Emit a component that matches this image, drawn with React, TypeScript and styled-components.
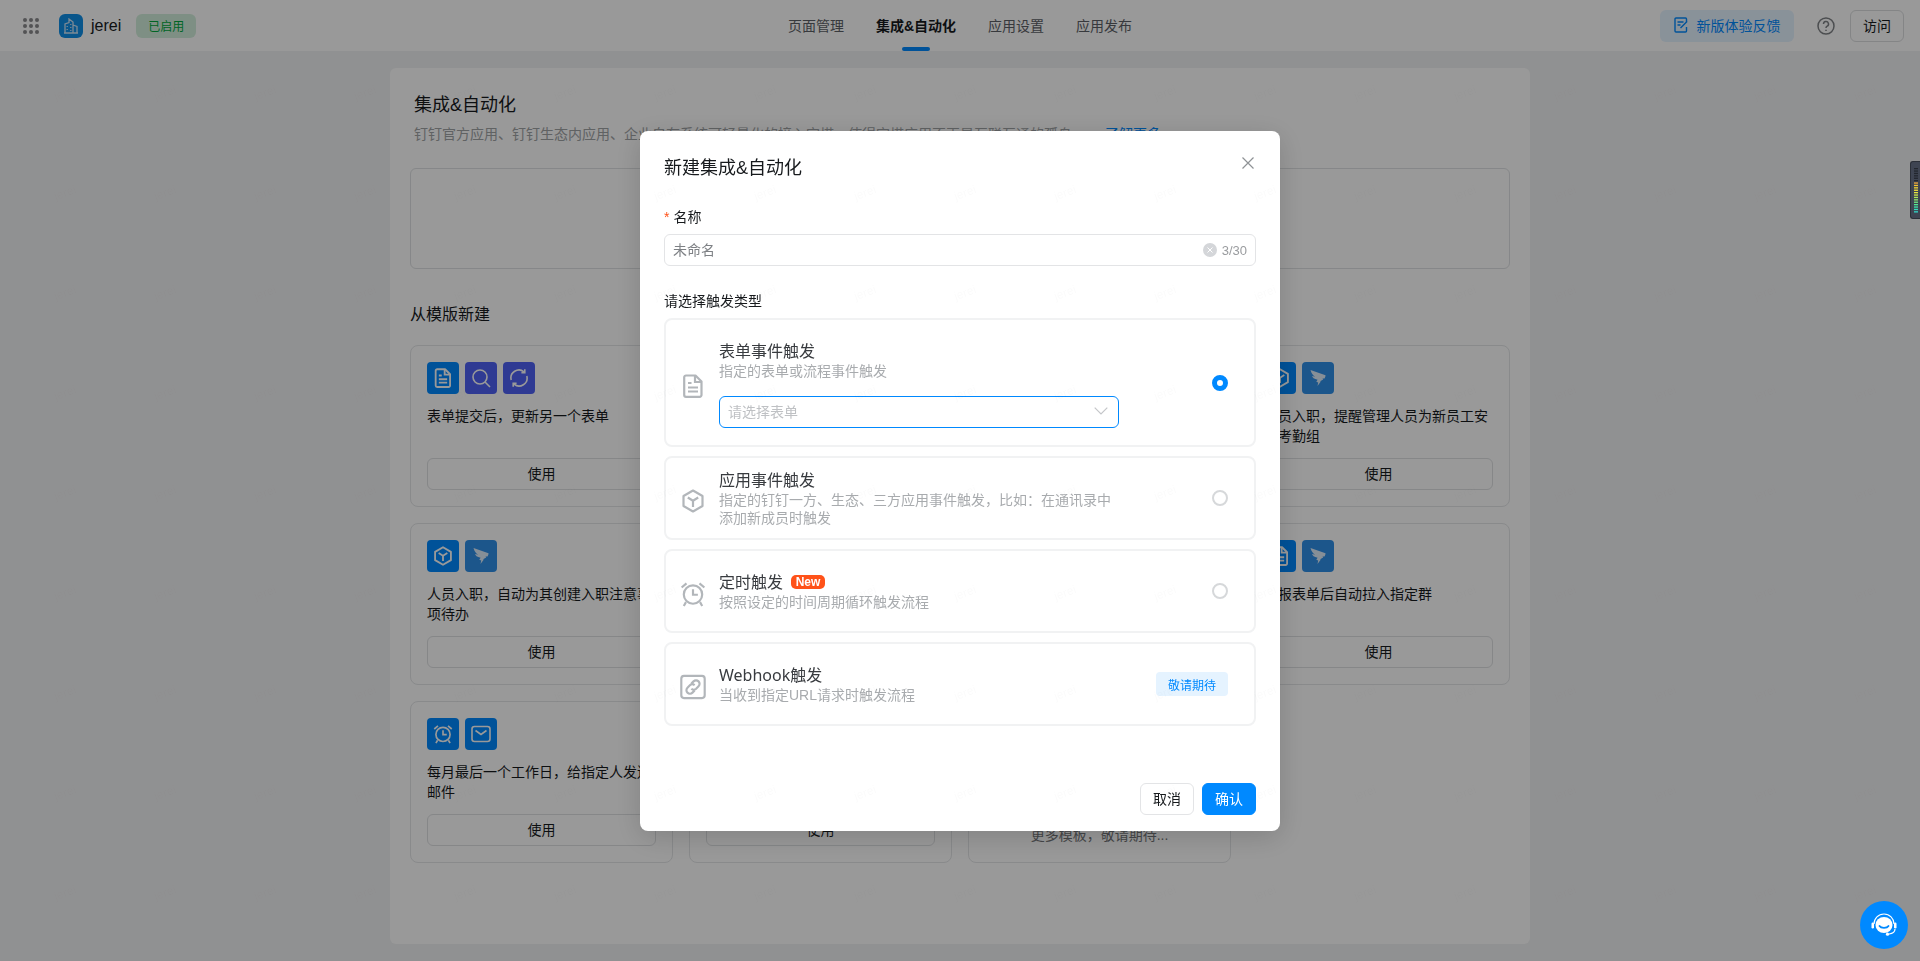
import React from "react";
import styled, { createGlobalStyle } from "styled-components";

const FONT = `"Liberation Sans", "Noto Sans CJK SC", sans-serif`;

const Global = createGlobalStyle`
  html, body { margin: 0; padding: 0; height: 100%; overflow: hidden; background: #f1f2f3; }
  body { font-family: ${FONT}; font-size: 14px; color: #171a1d; }
  * { box-sizing: border-box; }
`;

const Page = styled.div`
  width: 1920px;
  height: 961px;
  display: flex;
  flex-direction: column;
  overflow: hidden;
`;

const TopBar = styled.header`
  height: 51px;
  flex: none;
  background: #fff;
  display: grid;
  grid-template-columns: 1fr auto 1fr;
  align-items: center;
  padding: 0 16px;
`;

const BarLeft = styled.div`
  display: flex;
  align-items: center;
  padding-left: 7px;
`;

const AppLogo = styled.div`
  width: 24px;
  height: 24px;
  border-radius: 6px;
  margin-left: 20px;
  background: #0f8fe8;
  display: flex;
  align-items: center;
  justify-content: center;
`;

const AppName = styled.span`
  margin-left: 8px;
  font-size: 16px;
  color: #171a1d;
`;

const StatusBadge = styled.span`
  margin-left: 15px;
  width: 60px;
  height: 24px;
  border-radius: 6px;
  background: #d3efdc;
  color: #00a83c;
  font-size: 12px;
  display: flex;
  align-items: center;
  justify-content: center;
`;

const Tabs = styled.nav`
  display: flex;
  gap: 32px;
  height: 51px;
`;

const Tab = styled.div<{ $active?: boolean }>`
  position: relative;
  line-height: 52px;
  font-size: 14px;
  font-weight: ${(p) => (p.$active ? 700 : 400)};
  color: ${(p) => (p.$active ? "#171a1d" : "#5c6066")};
  ${(p) =>
    p.$active &&
    `&::after {
      content: "";
      position: absolute;
      left: 50%;
      bottom: 0;
      width: 28px;
      height: 4px;
      margin-left: -14px;
      border-radius: 2px;
      background: #0089ff;
    }`}
`;

const BarRight = styled.div`
  display: flex;
  align-items: center;
  justify-content: flex-end;
`;

const FeedbackButton = styled.button`
  width: 134px;
  height: 32px;
  border: 0;
  border-radius: 6px;
  background: #e5f3ff;
  color: #0089ff;
  font: 14px ${FONT};
  display: flex;
  align-items: center;
  justify-content: center;
  gap: 9px;
  padding: 0 0 2px;
`;

const HelpIcon = styled.div`
  margin-left: 23px;
  display: flex;
  color: #7f8286;
`;

const VisitButton = styled.button`
  width: 54px;
  height: 32px;
  margin-left: 15px;
  border: 1px solid #dcdee0;
  border-radius: 6px;
  background: #fff;
  color: #171a1d;
  font: 14px ${FONT};
  padding: 0 0 2px;
`;

const Content = styled.main`
  flex: 1;
  padding: 17px 390px 17px;
`;

const Panel = styled.section`
  height: 100%;
  background: #fff;
  border-radius: 6px;
  padding: 24px 20px 0;
`;

const PanelTitle = styled.h1`
  margin: 0 0 0 4px;
  font-size: 18px;
  font-weight: 400;
  line-height: 26px;
  color: #171a1d;
`;

const PanelDesc = styled.p`
  margin: 5px 0 0 4px;
  line-height: 22px;
  color: #a0a3a6;
  white-space: nowrap;
`;

const LearnMore = styled.a`
  margin-left: 19px;
  color: #0089ff;
`;

const EmptyBox = styled.div`
  height: 101px;
  margin-top: 23px;
  border: 1px solid #e0e2e4;
  border-radius: 6px;
`;

const SectionTitle = styled.h2`
  margin: 35px 0 19px;
  font-size: 16px;
  font-weight: 400;
  line-height: 22px;
  color: #171a1d;
`;

const TemplateGrid = styled.div`
  display: grid;
  grid-template-columns: repeat(4, 1fr);
  grid-auto-rows: 162px;
  gap: 16px;
`;

const TemplateCard = styled.article`
  border: 1px solid #e4e6e8;
  border-radius: 8px;
  padding: 16px;
  display: flex;
  flex-direction: column;
`;

const IconRow = styled.div`
  display: flex;
  gap: 6px;
`;

const IconTile = styled.div<{ $bg: string }>`
  width: 32px;
  height: 32px;
  border-radius: 4px;
  background: ${(p) => p.$bg};
  color: #fff;
  display: flex;
  align-items: center;
  justify-content: center;
`;

const TemplateText = styled.p`
  margin: 12px 0 0;
  height: 40px;
  line-height: 20px;
  color: #171a1d;
`;

const UseButton = styled.button`
  margin-top: auto;
  height: 32px;
  border: 1px solid #dfe1e3;
  border-radius: 6px;
  background: #fff;
  color: #171a1d;
  font: 14px ${FONT};
  padding: 0 0 3px;
`;

const MoreCard = styled(TemplateCard)`
  align-items: center;
  justify-content: flex-end;
  padding-bottom: 18px;
  color: #747679;
`;

const Backdrop = styled.div`
  position: fixed;
  inset: 0;
  background: rgba(0, 0, 0, 0.4);
  display: flex;
  justify-content: center;
  padding-top: 131px;
`;

const Modal = styled.div`
  width: 640px;
  height: 700px;
  background: #fff;
  border-radius: 8px;
  box-shadow: 0 6px 28px rgba(0, 0, 0, 0.16);
  padding: 25px 24px 16px;
  display: flex;
  flex-direction: column;
  position: relative;
`;

const ModalTitle = styled.h3`
  margin: 0;
  font-size: 18px;
  font-weight: 400;
  line-height: 24px;
  color: #171a1d;
`;

const CloseIcon = styled.div`
  position: absolute;
  top: 26px;
  right: 26px;
  display: flex;
  color: #8f9296;
`;

const FieldLabel = styled.div`
  margin-top: 27px;
  line-height: 20px;
  color: #171a1d;
`;

const RequiredStar = styled.span`
  color: #ff5219;
  margin-right: 4px;
`;

const NameInput = styled.div`
  margin-top: 7px;
  height: 32px;
  border: 1px solid #e3e4e6;
  border-radius: 6px;
  padding: 0 8px;
  display: flex;
  align-items: center;
  color: #7e8185;
`;

const InputValue = styled.span`
  flex: 1;
  margin-bottom: 2px;
`;

const ClearDot = styled.span`
  width: 14px;
  height: 14px;
  border-radius: 50%;
  background: #d4d6d9;
  color: #fff;
  display: flex;
  align-items: center;
  justify-content: center;
`;

const Counter = styled.span`
  margin-left: 5px;
  font-size: 13px;
  color: #9a9c9f;
`;

const TypeLabel = styled.div`
  margin-top: 25px;
  margin-bottom: 7px;
  line-height: 20px;
  color: #171a1d;
`;

const OptionList = styled.div`
  display: flex;
  flex-direction: column;
  gap: 9px;
`;

const OptionCard = styled.div<{ $tall?: boolean }>`
  height: ${(p) => (p.$tall ? "129px" : "84px")};
  border: 2px solid #f1f2f3;
  border-radius: 8px;
  padding: 0 26px 0 12px;
  display: flex;
  align-items: center;
`;

const OptionIcon = styled.div`
  width: 30px;
  height: 30px;
  margin-top: 6px;
  color: #b2b6ba;
  display: flex;
  align-items: center;
  justify-content: center;
  flex: none;
`;

const OptionBody = styled.div<{ $tall?: boolean }>`
  margin-left: 11px;
  margin-top: ${(p) => (p.$tall ? "3px" : "0")};
  width: 400px;
  flex: none;
`;

const OptionTitle = styled.div`
  display: flex;
  align-items: center;
  font-family: "Noto Sans", "Noto Sans CJK SC", sans-serif;
  font-size: 16px;
  line-height: 22px;
  color: #383b3f;
`;

const NewBadge = styled.span`
  margin-left: 8px;
  width: 34px;
  height: 14px;
  border-radius: 5px;
  background: #ff5219;
  color: #fff;
  font-family: ${FONT};
  font-size: 12px;
  font-weight: 700;
  line-height: 14px;
  text-align: center;
`;

const OptionDesc = styled.div`
  margin-top: 0;
  font-size: 14px;
  line-height: 18px;
  color: #a8abae;
`;

const FormSelect = styled.div`
  margin-top: 16px;
  height: 32px;
  border: 1px solid #0089ff;
  border-radius: 6px;
  padding: 0 10px 2px 8px;
  display: flex;
  align-items: center;
  justify-content: space-between;
  color: #bfc1c4;
`;

const Radio = styled.span<{ $checked?: boolean }>`
  margin-left: auto;
  width: 16px;
  height: 16px;
  border-radius: 50%;
  background: #fff;
  border: ${(p) => (p.$checked ? "5px solid #0089ff" : "2px solid #d6d8da")};
`;

const ComingSoon = styled.span`
  margin-left: auto;
  width: 72px;
  height: 24px;
  border-radius: 4px;
  background: #e5f3ff;
  color: #0089ff;
  font-size: 12px;
  display: flex;
  align-items: center;
  justify-content: center;
`;

const ModalFooter = styled.div`
  margin-top: auto;
  display: flex;
  justify-content: flex-end;
  gap: 8px;
`;

const FooterButton = styled.button<{ $primary?: boolean }>`
  width: 54px;
  height: 32px;
  border-radius: 6px;
  padding: 0 0 3px;
  font: 14px ${FONT};
  border: 1px solid ${(p) => (p.$primary ? "#0089ff" : "#e3e4e6")};
  background: ${(p) => (p.$primary ? "#0089ff" : "#fff")};
  color: ${(p) => (p.$primary ? "#fff" : "#171a1d")};
`;

const MeterWidget = styled.div`
  position: fixed;
  top: 161px;
  right: 0;
  width: 10px;
  height: 58px;
  background: #3e4452;
  border: 1px solid #2b2f38;
  border-right: 0;
  border-radius: 3px 0 0 3px;
`;

const ChatBubble = styled.div`
  position: fixed;
  left: 1860px;
  top: 901px;
  width: 48px;
  height: 48px;
  border-radius: 50%;
  background: #0089ff;
  display: flex;
  align-items: center;
  justify-content: center;
`;

const Watermarks = styled.div`
  position: fixed;
  inset: 0;
  display: grid;
  grid-template-columns: repeat(19, 100px);
  grid-auto-rows: 100px;
  pointer-events: none;
  overflow: hidden;
`;

const Watermark = styled.span`
  transform: translate(52px, 90px) rotate(-20deg);
  transform-origin: left top;
  font-size: 12px;
  color: rgba(0, 0, 0, 0.018);
  white-space: nowrap;
`;

type IconProps = { size?: number };

const DocIcon = ({ size = 20 }: IconProps) => (
  <svg width={size} height={size} viewBox="0 0 20 24" fill="none" stroke="currentColor" strokeWidth="2.2">
    <path d="M3 1.5h9.5L18.5 7.5V21a1.8 1.8 0 0 1-1.8 1.8H3A1.8 1.8 0 0 1 1.2 21V3.3A1.8 1.8 0 0 1 3 1.5Z" strokeLinejoin="round" />
    <path d="M12 2v6h6M5 9h3.5M5 13.5h10M5 17.500h10" />
  </svg>
);
const CubeIcon = ({ size = 24 }: IconProps) => (
  <svg width={size} height={size} viewBox="0 0 24 24" fill="none" stroke="currentColor" strokeWidth="2.2" strokeLinejoin="round">
    <path d="M12 1.5 21.5 7v10L12 22.5 2.5 17V7Z" />
    <path d="m6.8 8.5 5.2 3.2 5.2-3.2M12 11.7V18" />
  </svg>
);
const AlarmIcon = ({ size = 24 }: IconProps) => (
  <svg width={size} height={size} viewBox="0 0 24 24" fill="none" stroke="currentColor" strokeWidth="2">
    <circle cx="12" cy="12.5" r="8.5" />
    <path d="M12 7.5v5.2h4.5M1.5 6 6 2.2M22.5 6 18 2.2M5.5 19.5 3.5 23M18.5 19.5l2 3.5" />
  </svg>
);
const LinkIcon = ({ size = 24 }: IconProps) => (
  <svg width={size} height={size} viewBox="0 0 24 24" fill="none" stroke="currentColor" strokeWidth="2">
    <rect x="1.2" y="1.8" width="21.6" height="20.4" rx="2.5" />
    <path d="M10.5 8.8l2-2a3.2 3.2 0 0 1 4.6 4.6l-2.2 2.2a3.2 3.2 0 0 1-4.4 0" />
    <path d="M13.5 15.2l-2 2a3.2 3.2 0 0 1-4.6-4.6l2.2-2.2a3.2 3.2 0 0 1 4.4 0" />
  </svg>
);
const SearchIcon = () => (
  <svg width="20" height="20" viewBox="0 0 20 20" fill="none" stroke="currentColor" strokeWidth="1.6">
    <circle cx="9" cy="9" r="7" />
    <path d="m14 14 5 5" />
  </svg>
);
const SyncIcon = () => (
  <svg width="20" height="20" viewBox="0 0 20 20" fill="none" stroke="currentColor" strokeWidth="1.6">
    <path d="M2.2 12A8 8 0 0 1 15 3.8" />
    <path d="M17.8 8A8 8 0 0 1 5 16.2" />
    <path d="M15.8 1.2v3.4h-3.4M4.2 18.8v-3.4h3.4" />
  </svg>
);
const MailIcon = () => (
  <svg width="20" height="18" viewBox="0 0 20 18" fill="none" stroke="currentColor" strokeWidth="1.6">
    <rect x="1" y="1.5" width="18" height="15" rx="2.5" />
    <path d="m4.5 5.5 5.5 4 5.5-4" />
  </svg>
);
const DingWing = () => (
  <svg width="16" height="18" viewBox="0 0 16 18" fill="currentColor">
    <path d="M0.5 1 15.5 6.2c.2 1-.4 2.2-1 3.2l-2 .1.7 1-2.6 1.4-.3 1.3-2.8 3.8.7-3.6-1.9-.6 1.3-2.1C4 10 2.4 8.2 2 6.9l3.2.9C3.2 6.600 1.500 4.600.5 1Z" opacity=".85" />
  </svg>
);

const TileIcons: Record<string, React.ReactNode> = {
  doc: <DocIcon size={20} />,
  cube: <CubeIcon size={20} />,
  alarm: <AlarmIcon size={20} />,
  search: <SearchIcon />,
  sync: <SyncIcon />,
  mail: <MailIcon />,
  ding: <DingWing />,
};

const BLUE = "#0089ff";
const INDIGO = "#4f62f5";
const DING = "#2f8fe8";

type Tile = [string, string];
const templates: { icons: Tile[]; text: string }[] = [
  { icons: [["doc", BLUE], ["search", INDIGO], ["sync", INDIGO]], text: "表单提交后，更新另一个表单" },
  { icons: [["doc", BLUE], ["sync", INDIGO]], text: "表单提交后，同步数据到另一个表单" },
  { icons: [["doc", BLUE], ["ding", DING]], text: "表单提交后，发送工作通知给指定人" },
  { icons: [["cube", BLUE], ["ding", DING]], text: "人员入职，提醒管理人员为新员工安排考勤组" },
  { icons: [["cube", BLUE], ["ding", DING]], text: "人员入职，自动为其创建入职注意事项待办" },
  { icons: [["alarm", BLUE], ["doc", BLUE]], text: "每天定时检查表单数据并发送提醒" },
  { icons: [["doc", BLUE], ["ding", DING]], text: "审批通过后自动创建日程" },
  { icons: [["doc", BLUE], ["ding", DING]], text: "填报表单后自动拉入指定群" },
  { icons: [["alarm", BLUE], ["mail", BLUE]], text: "每月最后一个工作日，给指定人发送邮件" },
  { icons: [["alarm", BLUE], ["ding", DING]], text: "每周一定时发送工作提醒" },
];

const meterColors = [
  "#22262e", "#22262e", "#22262e", "#22262e", "#22262e", "#22262e",
  "#f2a93b", "#f4c431", "#f6d92e", "#f4e23a", "#e8e640", "#d0e84a", "#b0e858",
  "#8ee86a", "#6ee880", "#50e895", "#3fe4a8", "#35dcb8", "#30d8c8",
];

export default function App() {
  return (
    <>
      <Global />
      <Page>
        <TopBar>
          <BarLeft>
            <svg width="16" height="16" viewBox="0 0 16 16" fill="#8a8b8d">
              {[2, 8, 14].flatMap((y) =>
                [2, 8, 14].map((x) => <circle key={`${x}-${y}`} cx={x} cy={y} r="2" />)
              )}
            </svg>
            <AppLogo>
              <svg width="14" height="16" viewBox="0 0 14 16" fill="none" stroke="#cfe6f8" strokeWidth="1.3">
                <path d="M1 15V6l4-1.500V1l4 3v11M9 7l4 1.500V15M0 15h14M3.200 8v1M3.200 11v1M6.800 6v1M6.800 9v1M6.800 12v1" />
              </svg>
            </AppLogo>
            <AppName>jerei</AppName>
            <StatusBadge>已启用</StatusBadge>
          </BarLeft>
          <Tabs>
            <Tab>页面管理</Tab>
            <Tab $active>集成&amp;自动化</Tab>
            <Tab>应用设置</Tab>
            <Tab>应用发布</Tab>
          </Tabs>
          <BarRight>
            <FeedbackButton>
              <svg width="14" height="16" viewBox="0 0 14 16" fill="none" stroke="currentColor" strokeWidth="1.400">
                <path d="M12.500 5V2a1 1 0 0 0-1-1h-9.500a1 1 0 0 0-1 1v12a1 1 0 0 0 1 1h9.500a1 1 0 0 0 1-1v-4" />
                <path d="M3.500 5h6M3.500 8h3M6.500 11l6.500-6.500" />
              </svg>
              新版体验反馈
            </FeedbackButton>
            <HelpIcon>
              <svg width="18" height="18" viewBox="0 0 18 18" fill="none" stroke="currentColor" strokeWidth="1.500">
                <circle cx="9" cy="9" r="8" />
                <path d="M6.500 7a2.500 2.500 0 1 1 3.700 2.200C9.400 9.700 9 10.200 9 11" />
                <path d="M9 12.800v1.200" />
              </svg>
            </HelpIcon>
            <VisitButton>访问</VisitButton>
          </BarRight>
        </TopBar>
        <Content>
          <Panel>
            <PanelTitle>集成&amp;自动化</PanelTitle>
            <PanelDesc>
              钉钉官方应用、钉钉生态内应用、企业自有系统可轻量化的接入宜搭，使得宜搭应用不再是互联互通的孤岛。
              <LearnMore>了解更多</LearnMore>
            </PanelDesc>
            <EmptyBox />
            <SectionTitle>从模版新建</SectionTitle>
            <TemplateGrid>
              {templates.map((t) => (
                <TemplateCard key={t.text}>
                  <IconRow>
                    {t.icons.map(([name, bg], i) => (
                      <IconTile key={i} $bg={bg}>
                        {TileIcons[name]}
                      </IconTile>
                    ))}
                  </IconRow>
                  <TemplateText>{t.text}</TemplateText>
                  <UseButton>使用</UseButton>
                </TemplateCard>
              ))}
              <MoreCard>更多模板，敬请期待...</MoreCard>
            </TemplateGrid>
          </Panel>
        </Content>
      </Page>
      <Backdrop>
        <Modal>
          <ModalTitle>新建集成&amp;自动化</ModalTitle>
          <CloseIcon>
            <svg width="12" height="12" viewBox="0 0 12 12" fill="none" stroke="currentColor" strokeWidth="1.200">
              <path d="m.5.5 11 11M11.500.5l-11 11" />
            </svg>
          </CloseIcon>
          <FieldLabel>
            <RequiredStar>*</RequiredStar>名称
          </FieldLabel>
          <NameInput>
            <InputValue>未命名</InputValue>
            <ClearDot>
              <svg width="6" height="6" viewBox="0 0 6 6" fill="none" stroke="currentColor" strokeWidth="1">
                <path d="m.5.5 5 5M5.500.5l-5 5" />
              </svg>
            </ClearDot>
            <Counter>3/30</Counter>
          </NameInput>
          <TypeLabel>请选择触发类型</TypeLabel>
          <OptionList>
            <OptionCard $tall>
              <OptionIcon><DocIcon size={24} /></OptionIcon>
              <OptionBody $tall>
                <OptionTitle>表单事件触发</OptionTitle>
                <OptionDesc>指定的表单或流程事件触发</OptionDesc>
                <FormSelect>
                  请选择表单
                  <svg width="14" height="8" viewBox="0 0 14 8" fill="none" stroke="#c4c6c9" strokeWidth="1.200">
                    <path d="m.7.700 6.300 6.300L13.300.7" />
                  </svg>
                </FormSelect>
              </OptionBody>
              <Radio $checked />
            </OptionCard>
            <OptionCard>
              <OptionIcon><CubeIcon size={24} /></OptionIcon>
              <OptionBody>
                <OptionTitle>应用事件触发</OptionTitle>
                <OptionDesc>指定的钉钉一方、生态、三方应用事件触发，比如：在通讯录中添加新成员时触发</OptionDesc>
              </OptionBody>
              <Radio />
            </OptionCard>
            <OptionCard>
              <OptionIcon><AlarmIcon size={26} /></OptionIcon>
              <OptionBody>
                <OptionTitle>定时触发<NewBadge>New</NewBadge></OptionTitle>
                <OptionDesc>按照设定的时间周期循环触发流程</OptionDesc>
              </OptionBody>
              <Radio />
            </OptionCard>
            <OptionCard>
              <OptionIcon><LinkIcon size={26} /></OptionIcon>
              <OptionBody>
                <OptionTitle>Webhook触发</OptionTitle>
                <OptionDesc>当收到指定URL请求时触发流程</OptionDesc>
              </OptionBody>
              <ComingSoon>敬请期待</ComingSoon>
            </OptionCard>
          </OptionList>
          <ModalFooter>
            <FooterButton>取消</FooterButton>
            <FooterButton $primary>确认</FooterButton>
          </ModalFooter>
        </Modal>
      </Backdrop>
      <Watermarks>
        {Array.from({ length: 171 }, (_, i) => (
          <Watermark key={i}>jerei</Watermark>
        ))}
      </Watermarks>
      <MeterWidget>
        <svg width="9" height="56" viewBox="0 0 9 56">
          {meterColors.map((c, i) => (
            <rect key={i} x="3" y={6 + i * 2.400} width="4" height="1.300" fill={c} />
          ))}
        </svg>
      </MeterWidget>
      <ChatBubble>
        <svg width="32" height="32" viewBox="0 0 32 32" fill="none">
          <path d="M6 15a10 10 0 0 1 20 0" stroke="#fff" strokeWidth="1.200" />
          <ellipse cx="16" cy="16" rx="8.500" ry="8" fill="#fff" />
          <path d="M11.500 17c1.500 2.500 7.500 2.500 9 0" stroke="#0089ff" strokeWidth="1.800" strokeLinecap="round" />
          <rect x="3.500" y="13.500" width="2.500" height="6" rx="1.200" fill="#fff" />
          <rect x="26" y="13.500" width="2.500" height="6" rx="1.200" fill="#fff" />
          <path d="M27 20c0 3-2.500 4.500-6 5" stroke="#fff" strokeWidth="1.200" />
          <circle cx="19.500" cy="25.200" r="1.600" fill="#fff" />
        </svg>
      </ChatBubble>
    </>
  );
}
